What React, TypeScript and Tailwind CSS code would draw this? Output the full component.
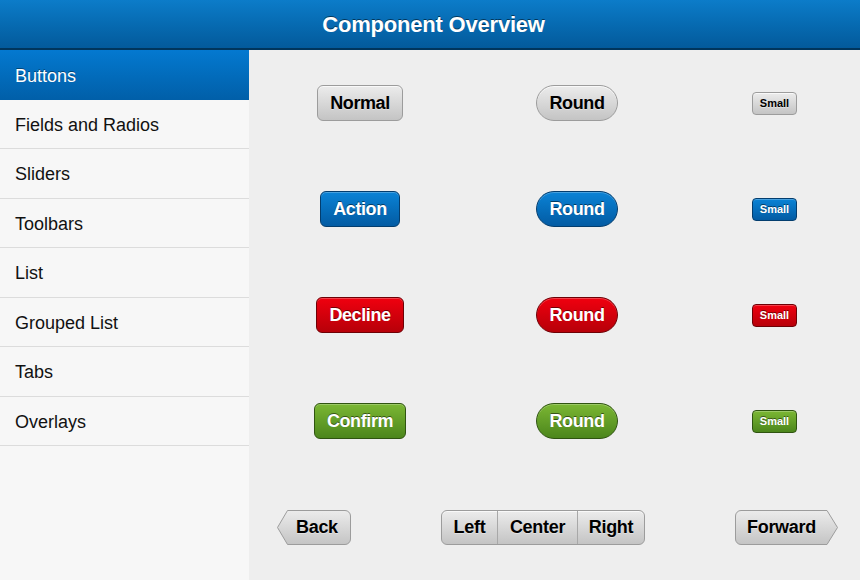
const font = { fontFamily: '"Liberation Sans", Helvetica, Arial, sans-serif' };

const nav = ["Buttons", "Fields and Radios", "Sliders", "Toolbars", "List", "Grouped List", "Tabs", "Overlays"];

const tones = {
  normal:
    "bg-gradient-to-b from-[#ececec] to-[#c4c4c4] border-[#9c9c9c] text-black [text-shadow:0_1px_0_rgba(255,255,255,0.4)] shadow-[inset_0_1px_0_rgba(255,255,255,0.7)]",
  action:
    "bg-gradient-to-b from-[#0b83d6] to-[#035ba3] border-[#033d6e] text-white [text-shadow:0_-1px_0_rgba(0,0,0,0.5)] shadow-[inset_0_1px_0_rgba(255,255,255,0.25)]",
  decline:
    "bg-gradient-to-b from-[#f0000f] to-[#b70009] border-[#6e0005] text-white [text-shadow:0_-1px_0_rgba(0,0,0,0.5)] shadow-[inset_0_1px_0_rgba(255,255,255,0.25)]",
  confirm:
    "bg-gradient-to-b from-[#7bb733] to-[#4c861c] border-[#2f5410] text-white [text-shadow:0_-1px_0_rgba(0,0,0,0.5)] shadow-[inset_0_1px_0_rgba(255,255,255,0.25)]",
};

type Tone = keyof typeof tones;

function Btn({ tone, label, shape }: { tone: Tone; label: string; shape: "normal" | "round" | "small" }) {
  const size =
    shape === "small"
      ? "h-[23px] px-[7px] text-[11px] rounded-[4px]"
      : shape === "round"
        ? "h-[36px] px-[13px] text-[18px] tracking-[-0.4px] rounded-full"
        : "h-[36px] px-[12px] text-[18px] tracking-[-0.4px] rounded-[6px]";
  return (
    <div className={`inline-flex items-center justify-center border font-bold leading-none ${size} ${tones[tone]}`}>
      {label}
    </div>
  );
}

function ArrowBtn({ label, dir }: { label: string; dir: "back" | "forward" }) {
  const w = dir === "back" ? 74 : 103;
  const path =
    dir === "back"
      ? `M10.5,0.5 H${w - 6} a5.5,5.5 0 0 1 5.5,5.5 V29 a5.5,5.5 0 0 1 -5.5,5.5 H10.5 L0.5,17.5 Z`
      : `M6,0.5 H${w - 11} L${w - 0.5},17.5 L${w - 11},34.5 H6 a5.5,5.5 0 0 1 -5.5,-5.5 V6 a5.5,5.5 0 0 1 5.5,-5.5 Z`;
  return (
    <div className="relative flex h-[35px] items-center" style={{ width: w }}>
      <svg className="absolute inset-0" width={w} height={35} viewBox={`0 0 ${w} 35`}>
        <defs>
          <linearGradient id={`g-${dir}`} x1="0" y1="0" x2="0" y2="1">
            <stop offset="0" stopColor="#ececec" />
            <stop offset="1" stopColor="#c4c4c4" />
          </linearGradient>
        </defs>
        <path d={path} fill={`url(#g-${dir})`} stroke="#9c9c9c" strokeWidth="1" />
      </svg>
      <span
        className={`relative text-[18px] font-bold tracking-[-0.3px] text-black [text-shadow:0_1px_0_rgba(255,255,255,0.4)] ${
          dir === "back" ? "pl-[19px]" : "pl-[12px]"
        }`}
      >
        {label}
      </span>
    </div>
  );
}

const rows: { tone: Tone; label: string }[] = [
  { tone: "normal", label: "Normal" },
  { tone: "action", label: "Action" },
  { tone: "decline", label: "Decline" },
  { tone: "confirm", label: "Confirm" },
];

export default function App() {
  return (
    <div className="flex h-[580px] w-[860px] flex-col overflow-hidden bg-[#eeeeee]" style={font}>
      <div className="flex h-[50px] shrink-0 items-center justify-center border-b-2 border-[#00355c] bg-gradient-to-b from-[#0c7cc9] to-[#035a9b]">
        <h1 className="pl-[7px] text-[22px] font-bold tracking-[-0.2px] text-white [text-shadow:0_-1px_0_rgba(0,0,0,0.5)]">
          Component Overview
        </h1>
      </div>
      <div className="flex flex-1">
        <div className="w-[249px] shrink-0 bg-[#f7f7f7]">
          {nav.map((item, i) => (
            <div
              key={item}
              className={`flex h-[49.5px] items-center pl-[15px] pt-[3px] text-[18px] ${
                i === 0
                  ? "bg-gradient-to-b from-[#0479d0] to-[#015fa8] text-white [text-shadow:0_-1px_0_rgba(0,0,0,0.4)]"
                  : "border-b border-[#dcdcdc] text-[#111]"
              }`}
            >
              {item}
            </div>
          ))}
        </div>
        <div className="grid flex-1 grid-rows-[repeat(5,106px)]">
          {rows.map((r) => (
            <div key={r.tone} className="grid grid-cols-[222px_212px_1fr] items-center">
              <div className="flex justify-center">
                <Btn tone={r.tone} label={r.label} shape="normal" />
              </div>
              <div className="flex justify-center">
                <Btn tone={r.tone} label="Round" shape="round" />
              </div>
              <div className="flex justify-center pl-[6px]">
                <Btn tone={r.tone} label="Small" shape="small" />
              </div>
            </div>
          ))}
          <div className="flex items-center justify-between pl-[28px] pr-[22px]">
            <ArrowBtn label="Back" dir="back" />
            <div className="flex h-[35px] overflow-hidden rounded-[6px] border border-[#9c9c9c] bg-gradient-to-b from-[#ececec] to-[#c4c4c4] text-[18px] font-bold tracking-[-0.3px] text-black shadow-[inset_0_1px_0_rgba(255,255,255,0.7)] [text-shadow:0_1px_0_rgba(255,255,255,0.4)]">
              <div className="flex w-[55px] items-center justify-center">Left</div>
              <div className="flex w-[80px] items-center justify-center border-l border-[#a8a8a8]">Center</div>
              <div className="flex w-[67px] items-center justify-center border-l border-[#a8a8a8]">Right</div>
            </div>
            <ArrowBtn label="Forward" dir="forward" />
          </div>
        </div>
      </div>
    </div>
  );
}
